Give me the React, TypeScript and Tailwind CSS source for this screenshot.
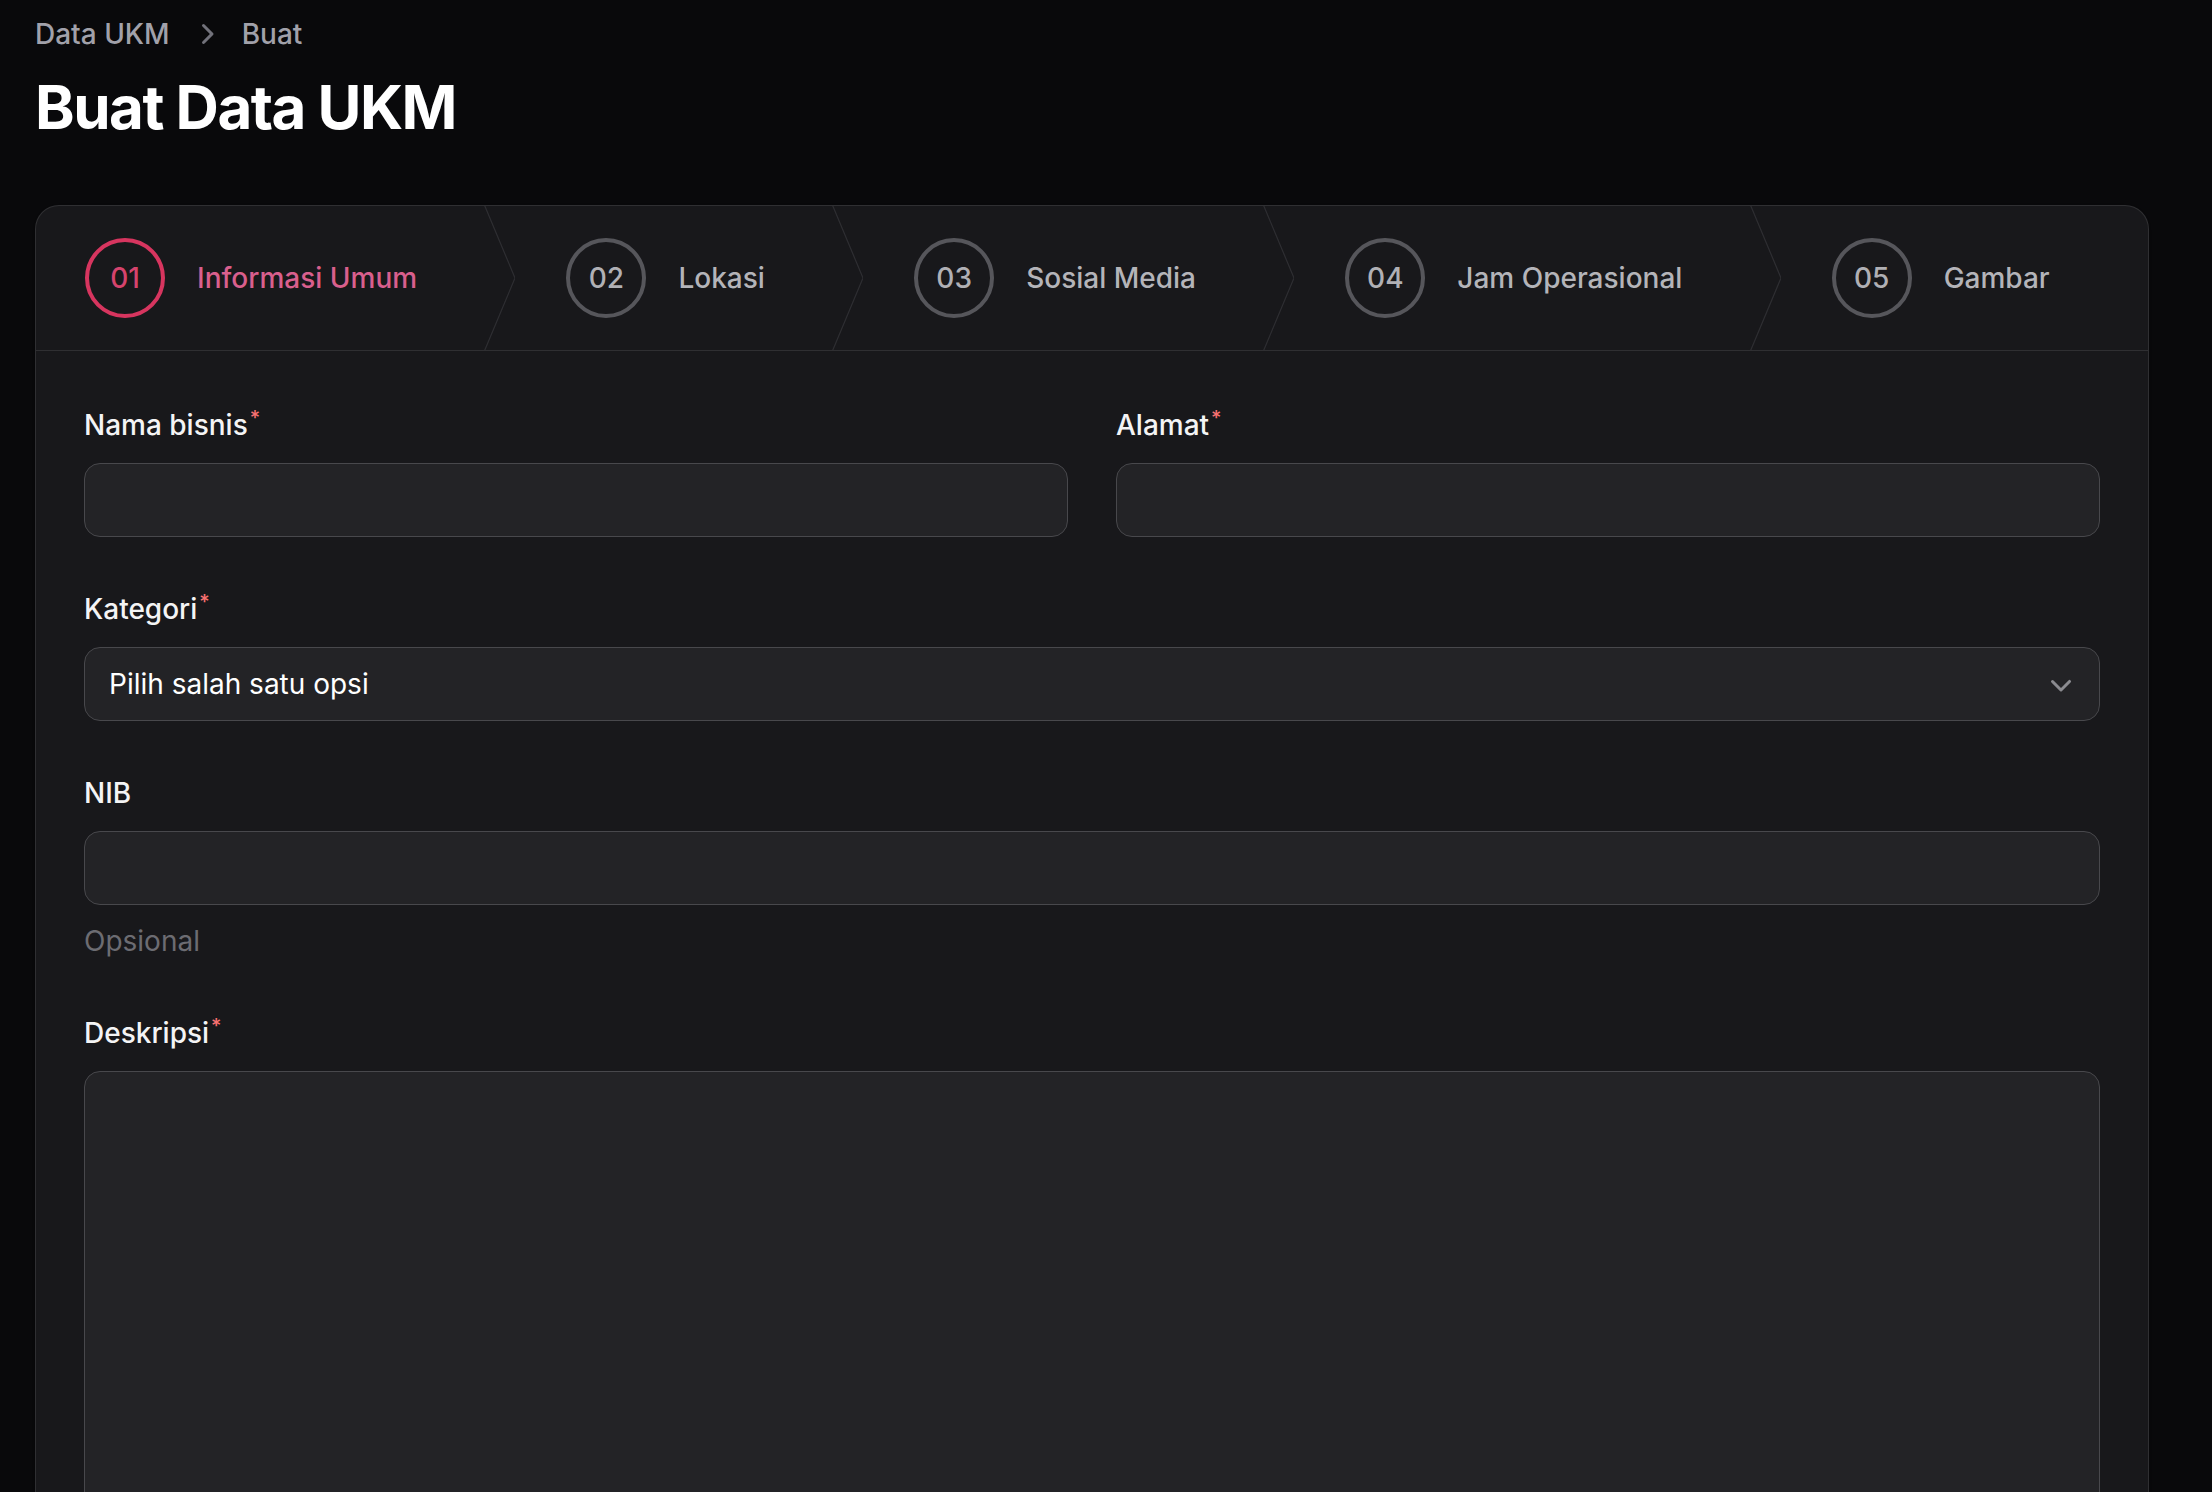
import React from "react";

const steps = [
  { n: "01", label: "Informasi Umum", active: true },
  { n: "02", label: "Lokasi" },
  { n: "03", label: "Sosial Media" },
  { n: "04", label: "Jam Operasional" },
  { n: "05", label: "Gambar" },
];

function Req() {
  return <sup className="ml-[2px] text-[20px] font-medium text-[#f87171]">*</sup>;
}

function Label({ text, req }: { text: string; req?: boolean }) {
  return (
    <label className="text-[28px] font-medium leading-[48px] text-[#f4f4f5]">
      {text}
      {req && <Req />}
    </label>
  );
}

function Input() {
  return (
    <div className="h-[74px] w-full rounded-[16px] border border-[#48484c] bg-[#232326]" />
  );
}

export default function App() {
  return (
    <div
      className="h-screen overflow-hidden bg-[#09090b] pl-[35px] pr-[63px] pt-[14px]"
      style={{ fontFamily: "Inter, 'Noto Sans', sans-serif" }}
    >
      <nav className="flex h-[40px] items-center gap-x-4 text-[28px] font-medium leading-[40px] text-[#a1a1aa]">
        <span>Data UKM</span>
        <svg viewBox="0 0 20 20" className="h-[40px] w-[40px] text-[#71717a]" fill="currentColor">
          <path
            fillRule="evenodd"
            d="M8.22 5.22a.75.75 0 0 1 1.06 0l4.25 4.25a.75.75 0 0 1 0 1.06l-4.25 4.25a.75.75 0 0 1-1.06-1.06L11.94 10 8.22 6.28a.75.75 0 0 1 0-1.06Z"
            clipRule="evenodd"
          />
        </svg>
        <span>Buat</span>
      </nav>
      <h1 className="mt-[17px] text-[60px] font-bold leading-[72px] tracking-tight text-white">
        Buat Data UKM
      </h1>

      <div className="mt-[62px] rounded-[24px] border border-white/10 bg-[#18181b] shadow-sm">
        <ol className="flex h-[145px] border-b border-white/10">
          {steps.map((s, i) => (
            <li
              key={s.n}
              className={`relative flex flex-auto items-center ${i === 0 ? "pl-[49px]" : "pl-[51px]"}`}
            >
              <div className="flex items-center gap-x-8">
                <div
                  className={`flex h-[80px] w-[80px] shrink-0 items-center justify-center rounded-full border-[4px] ${
                    s.active ? "border-[#d7355f]" : "border-[#56565b]"
                  }`}
                >
                  <span
                    className={`text-[28px] font-medium ${
                      s.active ? "text-[#d6436d]" : "text-[#b0b0b5]"
                    }`}
                  >
                    {s.n}
                  </span>
                </div>
                <span
                  className={`whitespace-nowrap text-[28px] font-medium ${
                    s.active ? "text-[#d95f8d]" : "text-[#b4b4b9]"
                  }`}
                >
                  {s.label}
                </span>
              </div>
              {i < steps.length - 1 && (
                <svg
                  className="absolute right-0 top-0 h-full w-[31px]"
                  viewBox="0 0 31 144"
                  preserveAspectRatio="none"
                  fill="none"
                >
                  <path
                    d="M0 -2 L31 72 L0 146"
                    stroke="#2e2e32"
                    strokeWidth="1.2"
                    vectorEffect="non-scaling-stroke"
                  />
                </svg>
              )}
            </li>
          ))}
        </ol>

        <div className="flex flex-col gap-y-12 px-12 pt-[50px]">
          <div className="grid grid-cols-2 gap-x-12">
            <div className="flex flex-col gap-y-[14px]">
              <Label text="Nama bisnis" req />
              <Input />
            </div>
            <div className="flex flex-col gap-y-[14px]">
              <Label text="Alamat" req />
              <Input />
            </div>
          </div>

          <div className="flex flex-col gap-y-[14px]">
            <Label text="Kategori" req />
            <div className="relative flex h-[74px] w-full items-center rounded-[16px] border border-[#48484c] bg-[#232326] pl-6">
              <span className="text-[28px] leading-[48px] text-white">Pilih salah satu opsi</span>
              <svg
                viewBox="0 0 20 20"
                fill="currentColor"
                className="absolute right-[18px] top-1/2 h-[40px] w-[40px] -translate-y-1/2 text-[#8b8b90]"
              >
                <path
                  fillRule="evenodd"
                  d="M5.22 8.22a.75.75 0 0 1 1.06 0L10 11.94l3.72-3.72a.75.75 0 1 1 1.06 1.06l-4.25 4.25a.75.75 0 0 1-1.06 0L5.22 9.28a.75.75 0 0 1 0-1.06Z"
                  clipRule="evenodd"
                />
              </svg>
            </div>
          </div>

          <div className="flex flex-col gap-y-[14px]">
            <Label text="NIB" />
            <Input />
            <p className="mt-[2px] text-[28px] leading-[40px] text-[#6c6c72]">Opsional</p>
          </div>

          <div className="flex flex-col gap-y-[14px]">
            <Label text="Deskripsi" req />
            <div className="h-[520px] w-full rounded-[16px] border border-[#48484c] bg-[#232326]" />
          </div>
        </div>
      </div>
    </div>
  );
}
